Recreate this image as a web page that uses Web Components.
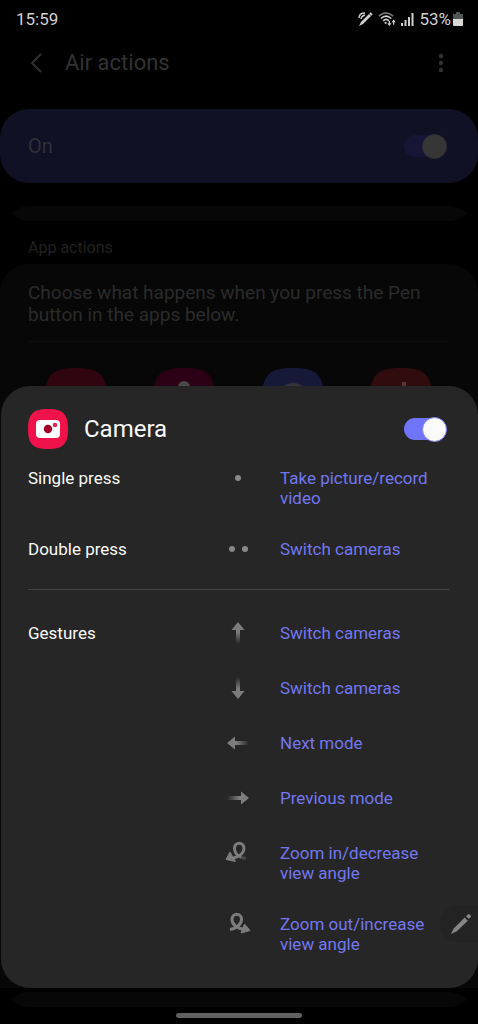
<!DOCTYPE html>
<html lang="en">
<head>
<meta charset="utf-8">
<meta name="viewport" content="width=device-width, initial-scale=1">
<title>Air actions</title>
<style>
html, body { margin: 0; background: #000; }
body { font-family: Roboto, "Liberation Sans", sans-serif; color: #fafafa; }
</style>
</head>
<body>
<air-actions-screen></air-actions-screen>
<script>
const define = (name, html) => customElements.define(name, class extends HTMLElement {
  constructor() {
    super();
    const t = document.createElement('template');
    t.innerHTML = html;
    this.attachShadow({ mode: 'open' }).append(t.content.cloneNode(true));
  }
  connectedCallback() {
    const input = this.shadowRoot.querySelector('input');
    if (input && this.hasAttribute('label')) input.setAttribute('aria-label', this.getAttribute('label'));
  }
});

define('status-bar', `
<style>
:host { display: flex; align-items: center; height: 38px; padding: 0 15px 0 16px; color: #d0d0d0; font-size: 17px; line-height: 22px; }
.time { flex: 1; }
.icons { display: flex; align-items: center; gap: 5px; }
svg { display: block; }
.battery { display: flex; align-items: center; gap: 2px; }
</style>
<span class="time">15:59</span>
<div class="icons">
  <svg width="16" height="16" viewBox="0 0 16 16" fill="none" stroke="#d0d0d0"><path d="M4 11 12 3l2 2-8 8-4 2z" fill="#d0d0d0" stroke="none"/><path d="M13 2l2 2" stroke-width="2"/><path d="M2 7c0-3 2-5 6-5M4 8c0-2 1-3 4-4" stroke-width="1.4"/></svg>
  <svg width="18" height="16" viewBox="0 0 19 16" fill="none" stroke="#d0d0d0" stroke-width="1.7"><path d="M1 5q7-7 15 0" stroke="#777"/><path d="M3 7.500q5.500-5 11 0M5.500 10q3-3 6 0"/><circle cx="8" cy="12" r="1.200" fill="#d0d0d0" stroke="none"/><path d="M12 10v4M16.500 14v-4" stroke-width="1.300"/><path d="M9.800 12.500h4.400L12 15.500zM14.300 11.500h4.400L16.500 8.500z" fill="#d0d0d0" stroke="none"/></svg>
  <svg width="13" height="15" viewBox="0 0 13 15" fill="#d0d0d0"><path d="M0 11h2v3H0zM3.500 8h2v6h-2zM7 5h2v9H7zM10.500 1h2v13h-2z"/></svg>
  <span class="battery">53%<svg width="10" height="15" viewBox="0 0 10 15"><path d="M3 0h4v2h3v6H0V2h3z" fill="#555"/><path d="M0 7h10v6q0 1-1 1H1q-1 0-1-1z" fill="#d8d8d8"/></svg></span>
</div>`);

define('toggle-switch', `
<style>
:host { display: block; flex: none; }
input { appearance: none; display: flex; align-items: center; justify-content: flex-end; margin: 0; width: 43px; height: 26px; }
input { position: relative; }
input::before { content: ""; position: absolute; left: 0; top: 2px; width: 41px; height: 22px; border-radius: 11px; background: var(--track, #6f74f8); }
input::after { content: ""; position: relative; box-sizing: border-box; width: 25px; height: 25px; border-radius: 50%; background: var(--thumb, #fafafa); border: 1px solid var(--ring, #7c80f8); }
input:not(:checked) { justify-content: flex-start; }
</style>
<input type="checkbox" role="switch" checked>`);

define('title-bar', `
<style>
:host { display: flex; align-items: center; height: 50px; margin-bottom: 21px; padding: 0 25px 0 28px; color: #323232; }
button { display: flex; align-items: center; justify-content: center; width: 18px; height: 30px; padding: 0; border: 0; background: none; color: inherit; }
h1 { flex: 1; margin: 0 0 0 19px; font-size: 22px; line-height: 26px; font-weight: 400; }
.more { width: 24px; }
</style>
<button aria-label="Back"><svg width="18" height="20" viewBox="0 0 18 20" fill="none" stroke="currentColor" stroke-width="2"><path d="M13 1 4 10l9 9"/></svg></button>
<h1>Air actions</h1>
<button class="more" aria-label="More options"><svg width="6" height="20" viewBox="0 0 6 20" fill="currentColor"><circle cx="3" cy="3" r="2.200"/><circle cx="3" cy="10" r="2.200"/><circle cx="3" cy="17" r="2.200"/></svg></button>`);

define('master-switch', `
<style>
:host { display: flex; align-items: center; justify-content: space-between; height: 74px; padding: 0 31px 0 28px; border-radius: 29px; background: #111125; color: #303039; font-size: 20px; line-height: 24px; --track: #151535; --thumb: #363636; --ring: #303033; }
</style>
<span>On</span>
<toggle-switch label="Air actions"></toggle-switch>`);

define('section-edge', `
<style>
:host { display: block; height: 15px; }
svg { display: block; width: 100%; height: 100%; }
.row { display: flex; height: 100%; padding: 0 11px; }
.end { width: 20px; flex: none; }
.mid { flex: 1; background: #070707; }
</style>
<div class="row">
  <svg class="end" viewBox="0 0 20 15"><path d="M20 0h-3Q6 1 0 7.500 6 14 17 15h3z" fill="#070707"/></svg>
  <div class="mid"></div>
  <svg class="end" viewBox="0 0 20 15"><path d="M0 0h3q11 1 17 7.500Q14 14 3 15H0z" fill="#070707"/></svg>
</div>`);

define('app-actions', `
<style>
:host { display: flex; flex-direction: column; flex: 1; padding-top: 17px; color: #2b2b2b; }
h2 { margin: 0 28px 6px; font-size: 16px; line-height: 20px; font-weight: 400; color: #202020; }
.card { flex: 1; padding: 18px 28px 0; border-radius: 29px 29px 0 0; background: #070707; }
p { margin: 0; padding-bottom: 15px; border-bottom: 1px solid #0e0e0e; font-size: 19px; line-height: 22px; }
.apps { display: flex; justify-content: space-between; padding: 26px 18px 0 17px; }
svg { display: block; }
</style>
<h2>App actions</h2>
<div class="card">
  <p>Choose what happens when you press the Pen button in the apps below.</p>
  <div class="apps">
    <svg width="62" height="62" viewBox="0 0 62 62"><path d="M31 0C55 0 62 7 62 31S55 62 31 62 0 55 0 31 7 0 31 0" fill="#30050f"/></svg>
    <svg width="62" height="62" viewBox="0 0 62 62"><path d="M31 0C55 0 62 7 62 31S55 62 31 62 0 55 0 31 7 0 31 0" fill="#2b0015"/><circle cx="31" cy="19" r="6" fill="#494949"/></svg>
    <svg width="62" height="62" viewBox="0 0 62 62"><path d="M31 0C55 0 62 7 62 31S55 62 31 62 0 55 0 31 7 0 31 0" fill="#171938"/><circle cx="31" cy="31" r="16" fill="#333339"/></svg>
    <svg width="62" height="62" viewBox="0 0 62 62"><path d="M31 0C55 0 62 7 62 31S55 62 31 62 0 55 0 31 7 0 31 0" fill="#300c0e"/><path d="M34 14v24" stroke="#51383a" stroke-width="4"/></svg>
  </div>
</div>`);

define('action-row', `
<style>
:host { display: grid; grid-template-columns: 183px 54px 1fr; margin-bottom: var(--after, 35px); font-size: 17px; line-height: 20px; }
.mark { display: flex; align-items: center; justify-content: center; height: 20px; }
a { justify-self: start; margin-left: 15px; color: #7377ef; text-decoration: none; max-width: 160px; }
::slotted(svg) { display: block; flex: none; overflow: visible; }
</style>
<span><slot name="label"></slot></span>
<span class="mark"><slot name="mark"></slot></span>
<a href="#"><slot></slot></a>`);

const arrow = (id, angle) => `<svg slot="mark" width="22" height="22" viewBox="0 0 22 22"><defs><linearGradient id="${id}" x1="0" y1="0" x2="0" y2="1"><stop stop-color="#7c7c7c"/><stop offset=".45" stop-color="#7c7c7c"/><stop offset="1" stop-color="#7c7c7c" stop-opacity="0"/></linearGradient></defs><path transform="rotate(${angle} 11 11)" d="M11 0 17.500 8H13V22H9V8H4.500z" fill="url(#${id})"/></svg>`;

define('camera-sheet', `
<style>
:host { display: block; position: absolute; left: 1px; right: 0; bottom: 36px; box-sizing: border-box; padding: 23px 29px 34px 27px; border-radius: 29px; background: #262626; }
header { display: flex; align-items: center; gap: 16px; height: 40px; margin-bottom: 19px; padding-right: 2px; }
h2 { flex: 1; margin: 0; font-size: 24px; line-height: 28px; font-weight: 400; }
svg { display: block; }
hr { height: 1px; margin: 30px 0 33px; border: 0; background: #444; }
.first { --after: 31px; }
.last { --after: 0; }
.zoom { --after: 31px; }
</style>
<header>
  <svg width="40" height="40" viewBox="0 0 40 40"><path d="M20 0C35 0 40 5 40 20S35 40 20 40 0 35 0 20 5 0 20 0" fill="#f0134b"/><rect x="8" y="11" width="24" height="18" rx="4" fill="#fff"/><circle cx="20" cy="20" r="4.200" fill="#a00028"/><circle cx="27" cy="16" r="2.300" fill="#e0274f"/></svg>
  <h2>Camera</h2>
  <toggle-switch label="Camera"></toggle-switch>
</header>
<action-row class="first"><span slot="label">Single press</span><svg slot="mark" width="8" height="8"><circle cx="4" cy="4" r="3" fill="#888"/></svg>Take picture/record video</action-row>
<action-row class="last"><span slot="label">Double press</span><svg slot="mark" width="20" height="8"><circle cx="4" cy="4" r="3" fill="#888"/><circle cx="17" cy="4" r="3" fill="#888"/></svg>Switch cameras</action-row>
<hr>
<action-row><span slot="label">Gestures</span>${arrow('up', 0)}Switch cameras</action-row>
<action-row>${arrow('down', 180)}Switch cameras</action-row>
<action-row>${arrow('left', 270)}Next mode</action-row>
<action-row>${arrow('right', 90)}Previous mode</action-row>
<action-row class="zoom"><svg slot="mark" width="24" height="22" viewBox="0 0 24 22" fill="none" stroke="#7c7c7c" stroke-width="3"><path d="M6 16.500C12 15 18 12 18 6.500 18-.5 8.500-.5 8.500 6.500c0 4 3 8 7.500 9"/><path d="M15 15.500l5 1" stroke="#484848"/><path d="M4 10l5.500 9.500L0 17.500z" fill="#7c7c7c" stroke="#7c7c7c" stroke-width="1"/></svg>Zoom in/decrease view angle</action-row>
<action-row class="last"><svg slot="mark" width="24" height="22" viewBox="0 0 24 22" fill="none" stroke="#7c7c7c" stroke-width="3"><path d="M4 16.500c6-1 11.500-5 11.500-10C15.500-.5 6-.5 6 6.500c0 5 5 9 13 10"/><path d="M18.500 11 24 17.500l-9 2.500z" fill="#7c7c7c" stroke="#7c7c7c" stroke-width="1"/></svg>Zoom out/increase view angle</action-row>`);

define('pen-button', `
<style>
:host { display: block; position: absolute; right: 0; bottom: 81px; }
button { display: flex; align-items: center; justify-content: center; width: 38px; height: 38px; padding: 0 0 0 4px; border: 0; border-radius: 19px 0 0 19px; background: #232323; }
svg { flex: none; }
</style>
<button aria-label="Air command"><svg width="22" height="22" viewBox="0 0 24 24" fill="#858585"><path d="M1 23 4 17 16 5l3.500 3.500L7.500 20z"/><path d="M17.500 3.500 19.500 1.500q1-1 2 0l1 1q1 1 0 2l-2 2z"/></svg></button>`);

define('air-actions-screen', `
<style>
:host { display: flex; flex-direction: column; position: relative; min-height: 100vh; overflow: hidden; background: #000; }
master-switch { margin-bottom: 23px; }
footer { display: flex; flex-direction: column; align-items: center; gap: 6px; height: 36px; box-sizing: border-box; padding-top: 4px; }
footer section-edge { width: 100%; }
.home { flex: none; width: 126px; height: 5px; margin-bottom: 4px; border-radius: 3px; background: #606060; }
</style>
<status-bar></status-bar>
<title-bar></title-bar>
<master-switch></master-switch>
<section-edge></section-edge>
<app-actions></app-actions>
<footer><section-edge></section-edge><div class="home"></div></footer>
<camera-sheet></camera-sheet>
<pen-button></pen-button>`);
</script>
</body>
</html>
